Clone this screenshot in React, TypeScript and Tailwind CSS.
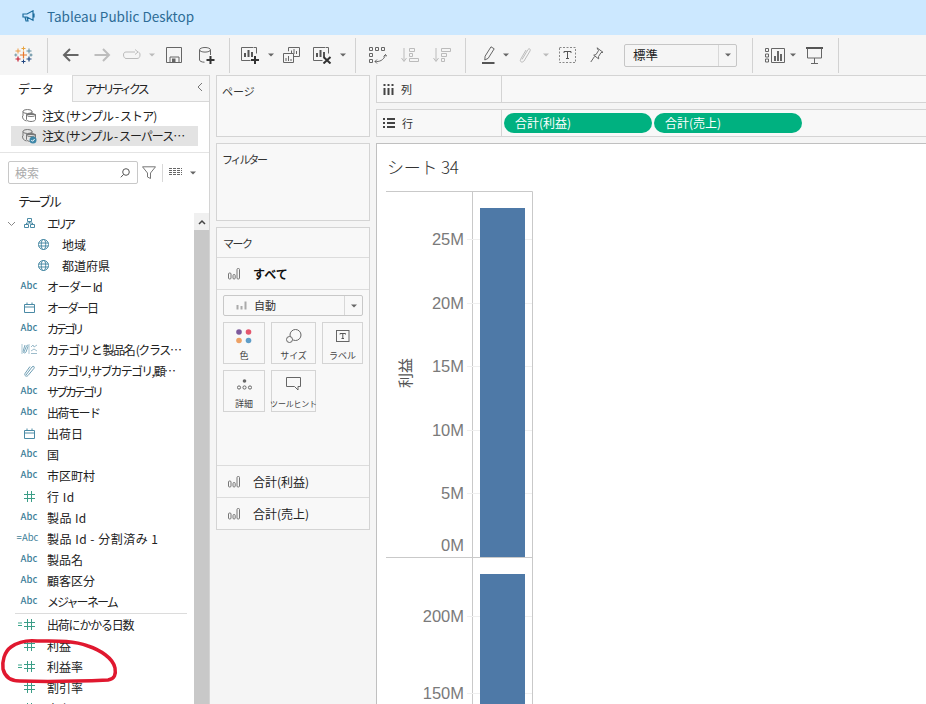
const FONT = '"Noto Sans CJK JP","Noto Sans",sans-serif';

function Svg({ w, h, className = "", children }: { w: number; h: number; className?: string; children?: React.ReactNode }) {
  return (
    <svg width={w} height={h} viewBox={`0 0 ${w} ${h}`} fill="none" className={`shrink-0 block ${className}`}>
      {children}
    </svg>
  );
}

function Caret({ c = "#777", className = "" }: { c?: string; className?: string }) {
  return (
    <Svg w={6} h={4} className={className}>
      <path d="M0 0.5h6L3 3.5z" fill={c} />
    </Svg>
  );
}

function Sep({ className = "" }: { className?: string }) {
  return <div className={`w-px h-[35px] bg-[#d2d2d2] shrink-0 ${className}`} />;
}

function BarsIcon({ c = "#777" }: { c?: string }) {
  return (
    <Svg w={12} h={12}>
      <rect x=".5" y="5" width="2.500" height="6" rx="1" stroke={c} />
      <rect x="5" y="6.500" width="2.200" height="4.500" rx="1" stroke={c} />
      <rect x="9" y=".5" width="2.500" height="10.500" rx="1" stroke={c} />
    </Svg>
  );
}

function Logo() {
  const P = ({ x, y, r, c, t = 1 }: { x: number; y: number; r: number; c: string; t?: number }) => (
    <path d={`M${x - r} ${y}h${2 * r}M${x} ${y - r}v${2 * r}`} stroke={c} strokeWidth={t} />
  );
  return (
    <Svg w={19} h={18} className="ml-[14px]">
      <P x={9.5} y={9} r={3.5} c="#e8762b" t={1.2} />
      <P x={9.5} y={2.5} r={2} c="#e8a33d" />
      <P x={4} y={5} r={2.5} c="#eb9a45" />
      <P x={15} y={5} r={2.5} c="#5b879b" />
      <P x={1.8} y={9} r={1.5} c="#7199a6" />
      <P x={17} y={9} r={1.5} c="#59879b" />
      <P x={4} y={13} r={2.5} c="#c72035" t={1.2} />
      <P x={15} y={13} r={2.5} c="#1f457e" t={1.2} />
      <P x={9.5} y={15.5} r={2} c="#1f447e" />
    </Svg>
  );
}

function NewSheet({ kind }: { kind: "add" | "clear" }) {
  return (
    <Svg w={19} h={18}>
      <path d="M12 1.500H.5v13h9" stroke="#666" />
      <path d="M12.500 1.500h3v6" stroke="#666" />
      <path d="M4 11V7M7.500 11V4M11 11V6" stroke="#555" strokeWidth="2" />
      {kind === "add" ? (
        <path d="M14 10v8M10 14h8" stroke="#333" strokeWidth="2" />
      ) : (
        <path d="M10.500 11l7 6.500M17.500 11l-7 6.500" stroke="#333" strokeWidth="2" />
      )}
    </Svg>
  );
}

function Toolbar() {
  return (
    <div className="h-10 bg-[#f5f5f5] flex items-center shrink-0">
      <Logo />
      <Sep className="ml-[14px]" />
      <Svg w={17} h={16} className="ml-[14px]">
        <path d="M16.500 8H2M8 2L2 8l6 6" stroke="#666" strokeWidth="2" />
      </Svg>
      <Svg w={17} h={16} className="ml-[15px]">
        <path d="M.5 8H15M9 2l6 6-6 6" stroke="#bdbdbd" strokeWidth="2" />
      </Svg>
      <Svg w={18} h={12} className="ml-[12px]">
        <path d="M3 3h9M12 .5L15 3l-3 2.500" stroke="#bbb" />
        <path d="M3 3C1 3 .5 4.500.5 6S1.500 9.500 3 9.500h11c2 0 3-1.500 3-3.500 0-1.500-.5-2.500-1.500-3" stroke="#bbb" />
      </Svg>
      <Caret c="#bbb" className="ml-[8px]" />
      <Svg w={16} h={16} className="ml-[11px]">
        <path d="M.5.5h15v15H.500z" stroke="#666" />
        <path d="M4 15.500V10h9v5.500" stroke="#666" />
        <rect x="6" y="11.500" width="3.500" height="3.500" fill="#666" />
      </Svg>
      <Svg w={16} h={17} className="ml-[17px]">
        <ellipse cx="6" cy="2.800" rx="5.500" ry="2.300" stroke="#666" />
        <path d="M.5 3v10c0 1 2 2.200 5 2.200M11.500 3v5" stroke="#666" />
        <path d="M11.500 9v8M7.500 13h8" stroke="#333" strokeWidth="2" />
      </Svg>
      <Sep className="ml-[14px]" />
      <div className="ml-[11px]"><NewSheet kind="add" /></div>
      <Caret c="#666" className="ml-[8px]" />
      <Svg w={17} h={16} className="ml-[9px]">
        <path d="M6 4h-.5V.5h11v9H11" stroke="#666" />
        <path d="M8.500 7V3.500M11 7V2M13.500 7V4" stroke="#666" />
        <path d="M.5 6.500h10v9H.500z" stroke="#666" fill="#f5f5f5" />
        <path d="M3 14v-3M5.500 14V9M8 14v-2" stroke="#666" />
      </Svg>
      <div className="ml-[13px]"><NewSheet kind="clear" /></div>
      <Caret c="#666" className="ml-[8px]" />
      <Sep className="ml-[9px]" />
      <Svg w={18} h={17} className="ml-[13px]">
        <path d="M.5.5h3v3h-3zM6.500.5h3v3h-3zM12.500.5h3v3h-3zM.5 6.500h3v3h-3zM.5 12.500h3v3h-3z" stroke="#666" />
        <path d="M6 14.500c4 .5 9-1 10.500-7M14.500 9.500l2-2 1.500 2M6 14.500l2-2M6 14.500l2 2" stroke="#666" />
      </Svg>
      <Svg w={18} h={16} className="ml-[14px]">
        <path d="M3 1v13M.5 11L3 14.500 5.500 11" stroke="#bbb" />
        <path d="M8.500 1.500h5v3h-5zM8.500 6.500h3v3h-3zM8.500 11.500h9v3h-9z" stroke="#bbb" />
      </Svg>
      <Svg w={18} h={16} className="ml-[14px]">
        <path d="M3 1v13M.5 11L3 14.500 5.500 11" stroke="#bbb" />
        <path d="M8.500 1.500h9v3h-9zM8.500 6.500h5v3h-5zM8.500 11.500h3v3h-3z" stroke="#bbb" />
      </Svg>
      <Sep className="ml-[14px]" />
      <Svg w={13} h={18} className="ml-[16px]">
        <path d="M9 .8l3.200 2-6 9.500-3.400 1.700.3-3.800z" stroke="#666" />
        <path d="M0 17h12.500" stroke="#555" strokeWidth="2" />
      </Svg>
      <Caret c="#666" className="ml-[8px]" />
      <Svg w={12} h={16} className="ml-[10px]">
        <path d="M3 12.500l6-10c1-1.500 3-.5 2 1.500L5 14c-1.500 2-4.500 1-3.500-1.500L7 3" stroke="#bbb" />
      </Svg>
      <Caret c="#bbb" className="ml-[12px]" />
      <Svg w={17} h={16} className="ml-[10px]">
        <rect x=".5" y=".5" width="16" height="15" stroke="#888" strokeDasharray="2 1.500" />
        <path d="M5 4.500h7M5 4.500v1.500M12 4.500v1.500M8.500 4.500v7M7 11.500h3" stroke="#555" />
      </Svg>
      <Svg w={14} h={16} className="ml-[14px]">
        <path d="M7 .8l6 4.500-2 .3-2.500 4 .2 2.300-5-3.700 2.300-.6 2.500-4z" stroke="#666" />
        <path d="M4.500 9.500L.8 15" stroke="#666" />
      </Svg>
      <div className="ml-5 w-[113px] h-[23px] border border-[#c6c6c6] rounded-[2px] flex items-center shrink-0">
        <span className="flex-1 pl-2 text-[12.500px] text-[#222]">標準</span>
        <div className="w-[18px] h-full border-l border-[#d8d8d8] flex items-center justify-center">
          <Caret c="#666" />
        </div>
      </div>
      <Sep className="ml-[15px]" />
      <Svg w={20} h={15} className="ml-3">
        <path d="M.5.5h3v3h-3zM.5 6h3v3h-3zM.5 11h3v3h-3zM6.500.5h13v14h-13z" stroke="#666" />
        <path d="M10 13V8M13 13V3M16 13V6" stroke="#666" strokeWidth="2" />
      </Svg>
      <Caret c="#666" className="ml-[5px]" />
      <Svg w={17} h={17} className="ml-[10px]">
        <path d="M0 1h17" stroke="#555" strokeWidth="2" />
        <path d="M1.500 1.500v9.500h14V1.500M8.500 11v5M5 16.500h7" stroke="#666" />
      </Svg>
      <Sep className="ml-[15px]" />
    </div>
  );
}

function Cyl({ check = false }: { check?: boolean }) {
  return (
    <Svg w={16} h={16}>
      <ellipse cx="6.500" cy="3.500" rx="4.500" ry="2" stroke="#777" />
      <path d="M2 3.500V8M11 3.500V6" stroke="#777" />
      <path d="M5.500 6.500h9v5c0 1-2 2-4.500 2s-4.500-1-4.500-2z" stroke="#777" />
      <ellipse cx="10" cy="7" rx="4.500" ry="1.500" stroke="#777" />
      <path d="M1.500 8c0 3 1 4 4 5" stroke="#777" />
      {check && <circle cx="12" cy="12" r="3.500" fill="#3d87a8" />}
      {check && <path d="M10.300 12l1.300 1.300 2-2.300" stroke="#fff" />}
    </Svg>
  );
}

function Abc() {
  return <span className="text-[9.500px] leading-none text-[#3f7f9a] font-['Liberation_Sans'] font-medium">Abc</span>;
}
function EqAbc() {
  return <span className="text-[9.500px] leading-none text-[#3f7f9a] font-['Liberation_Sans'] -ml-[3px]">=Abc</span>;
}
function Hash({ eq = false }: { eq?: boolean }) {
  return (
    <span className="flex items-center">
      {eq && (
        <Svg w={5} h={5} className="mr-[1px] -ml-[6px]">
          <path d="M0 1h4M0 3.500h4" stroke="#3ba58a" />
        </Svg>
      )}
      <Svg w={11} h={11}>
        <path d="M3.500 0v11M7.500 0v11M0 3.500h11M0 7.500h11" stroke="#3b9d87" />
      </Svg>
    </span>
  );
}
function Cal() {
  return (
    <Svg w={11} h={11}>
      <path d="M.5 2.500h10v8H.500zM.5 5h10M3 .5v2M8 .5v2" stroke="#4a8aa5" />
    </Svg>
  );
}
function Globe() {
  return (
    <Svg w={11} h={11}>
      <circle cx="5.500" cy="5.500" r="5" stroke="#4a8aa5" />
      <ellipse cx="5.500" cy="5.500" rx="2.200" ry="5" stroke="#4a8aa5" />
      <path d="M.5 4h10M.5 7h10" stroke="#4a8aa5" />
    </Svg>
  );
}
function Hier() {
  return (
    <Svg w={11} h={10}>
      <path d="M3.500.5h4v3h-4zM.5 6.500h4v3h-4zM6.500 6.500h4v3h-4zM5.500 3.500V5M2.500 6.500V5h6v1.500" stroke="#4a8aa5" />
    </Svg>
  );
}
function Clip() {
  return (
    <Svg w={12} h={13}>
      <path d="M3 11l6-8c1.300-1.500 3-.3 2 1.300L5 11.500c-1.500 1.500-4 .3-3-2L7 2.500" stroke="#6d9db3" />
    </Svg>
  );
}
function Cluster() {
  return (
    <Svg w={17} h={12}>
      <path d="M3 9l2.500-6c.6-1.500 2-1 1.500.5L5 9c-.5 1.500-3 1-3-.5L4 2" stroke="#7aa8bd" />
      <path d="M1 1v10M8 1v10" stroke="#a9c6d3" />
      <path d="M10 4l2-2 1 2 3-2M10 8l3-2 3 2M10 10.500h6" stroke="#9dbccb" />
    </Svg>
  );
}

type Row = { icon: React.ReactNode; text: string; indent?: boolean; divider?: boolean; t?: string };
const A = <Abc />;
const rows: Row[] = [
  { icon: <Hier />, text: "エリア", t: "tracking-[-3.5px]" },
  { icon: <Globe />, text: "地域", indent: true },
  { icon: <Globe />, text: "都道府県", indent: true },
  { icon: A, text: "オーダー Id", t: "tracking-[-1px]" },
  { icon: <Cal />, text: "オーダー日", t: "tracking-[-2px]" },
  { icon: A, text: "カテゴリ", t: "tracking-[-3.5px]" },
  { icon: <Cluster />, text: "カテゴリ と 製品名 (クラス…", t: "tracking-[-1.4px]" },
  { icon: <Clip />, text: "カテゴリ, サブカテゴリ, 顧…", t: "tracking-[-1.8px]" },
  { icon: A, text: "サブカテゴリ", t: "tracking-[-3px]" },
  { icon: A, text: "出荷モード", t: "tracking-[-1.5px]" },
  { icon: <Cal />, text: "出荷日" },
  { icon: A, text: "国" },
  { icon: A, text: "市区町村" },
  { icon: <Hash />, text: "行 Id", t: "tracking-[0.5px]" },
  { icon: A, text: "製品 Id", t: "tracking-[0.4px]" },
  { icon: <EqAbc />, text: "製品 Id - 分割済み 1", t: "tracking-[0.5px]" },
  { icon: A, text: "製品名" },
  { icon: A, text: "顧客区分" },
  { icon: A, text: "メジャー ネーム", divider: true, t: "tracking-[-2px]" },
  { icon: <Hash eq />, text: "出荷にかかる日数", t: "tracking-[-1.2px]" },
  { icon: <Hash />, text: "利益" },
  { icon: <Hash eq />, text: "利益率" },
  { icon: <Hash />, text: "割引率" },
  { icon: <Hash />, text: "売上" },
];

function FieldRow({ r, first }: { r: Row; first: boolean }) {
  return (
    <div className="h-[21px] flex items-center relative shrink-0">
      {first && (
        <Svg w={9} h={6} className="absolute left-[7px] top-[8px]">
          <path d="M1 1l3.500 3.500L8 1" stroke="#888" />
        </Svg>
      )}
      <div className={`flex items-center justify-center shrink-0 ${r.indent ? "w-[62px] pl-[38px] pr-[14px]" : "w-[47px] pl-[14px] pr-[3px]"}`}>
        {r.icon}
      </div>
      <span className={`text-[12px] leading-[21px] text-[#222] whitespace-nowrap ${r.t ?? ""}`}>{r.text}</span>
    </div>
  );
}

function Left() {
  return (
    <div className="w-[210px] shrink-0 bg-white border-r border-[#d4d4d4] flex flex-col">
      <div className="h-[27px] flex shrink-0 text-[12px] text-[#222]">
        <div className="w-[72px] flex items-center pl-[18px]">データ</div>
        <div className="flex-1 bg-[#f6f6f6] border-l border-t border-b border-[#d8d8d8] flex items-center pl-[12px] relative tracking-[-3px]">
          アナリティクス
          <Svg w={6} h={10} className="absolute right-[6px] top-[6px]">
            <path d="M5 1L1 5l4 4" stroke="#777" />
          </Svg>
        </div>
      </div>
      <div className="h-[51px] shrink-0 border-b border-[#e4e4e4] pl-[11px] pr-[11px] pt-[4px] text-[12px] text-[#222] whitespace-nowrap">
        <div className="h-[20px] flex items-center pl-[10px] gap-[5px] tracking-[-0.9px]"><Cyl />注文 (サンプル - ストア)</div>
        <div className="h-[20px] bg-[#e3e3e3] flex items-center pl-[10px] gap-[5px] tracking-[-1px]"><Cyl check />注文 (サンプル - スーパース…</div>
      </div>
      <div className="flex items-center pl-[8px] mt-[8px] shrink-0">
        <div className="w-[130px] h-[23px] border border-[#c8c8c8] rounded-[2px] flex items-center justify-between pl-[6px] pr-[7px] text-[12px] text-[#aaa]">
          検索
          <Svg w={10} h={10}>
            <circle cx="6" cy="4" r="3.300" stroke="#555" />
            <path d="M3.500 6.500L.8 9.300" stroke="#555" />
          </Svg>
        </div>
        <Svg w={14} h={13} className="ml-[4px]">
          <path d="M.5.8h13L8.500 7v5.500l-3-1.500V7z" stroke="#777" />
        </Svg>
        <div className="w-px h-[18px] bg-[#d8d8d8] ml-[6px]" />
        <Svg w={13} h={9} className="ml-[6px]">
          <path d="M0 .5h13M0 2.500h13M0 4.500h13M0 6.500h13" stroke="#666" strokeDasharray="3 1" />
        </Svg>
        <Caret c="#666" className="ml-[8px]" />
      </div>
      <div className="h-[29px] shrink-0 flex items-center pl-[18px] pt-[4px] text-[13px] text-[#222] tracking-[-2.500px]">テーブル</div>
      <div className="flex-1 flex min-h-0 overflow-hidden">
        <div className="flex-1 min-w-0 overflow-hidden flex flex-col -mt-[0.5px]">
          {rows.map((r, i) => (
            <div key={r.text} className="shrink-0">
              <FieldRow r={r} first={i === 0} />
              {r.divider && <div className="h-[2px] ml-[15px] mr-[7px] border-b border-[#dcdcdc]" />}
            </div>
          ))}
        </div>
        <div className="w-[15px] flex flex-col shrink-0">
          <div className="h-[17px] bg-[#f0f0f0] flex items-center justify-center">
            <Svg w={8} h={6}><path d="M1 5l3-3 3 3" stroke="#444" strokeWidth="1.500" /></Svg>
          </div>
          <div className="flex-1 bg-[#c8c8c8]" />
        </div>
      </div>
    </div>
  );
}

function MarkTile({ label, w, icon, small = false }: { label: string; w: string; icon: React.ReactNode; small?: boolean }) {
  return (
    <div className={`h-[42px] border border-[#d4d4d4] flex flex-col items-center shrink-0 ${w}`}>
      <div className="h-[26px] flex items-center justify-center">{icon}</div>
      <span className={`${small ? "text-[8px] tracking-[-0.2px]" : "text-[9px]"} leading-[14px] text-[#444] whitespace-nowrap`}>{label}</span>
    </div>
  );
}

function Middle() {
  const card = "bg-[#f8f8f8] border border-[#d4d4d4] shrink-0";
  return (
    <div className="w-[166px] shrink-0 bg-[#f5f5f5] flex flex-col pl-[6px] pr-[6px] gap-[6px]">
      <div className={`${card} h-[62px] pl-[5px] pt-[7px] text-[11px] text-[#333]`}>ページ</div>
      <div className={`${card} h-[78px] pl-[5px] pt-[7px] text-[11px] text-[#333] tracking-[-2.200px]`}>フィルター</div>
      <div className={`${card} h-[303px] flex flex-col`}>
        <div className="h-[30px] border-b border-[#dcdcdc] flex items-center pl-[6px] pt-[1px] text-[11px] text-[#333] shrink-0 tracking-[-1.500px]">マーク</div>
        <div className="h-[32px] border-b border-[#dcdcdc] flex items-center pl-[11px] gap-[13px] shrink-0">
          <BarsIcon />
          <span className="text-[12px] font-bold text-[#111]">すべて</span>
        </div>
        <div className="flex-1 px-[6px] pt-[5px]">
          <div className="h-[21px] border border-[#c8c8c8] rounded-[2px] flex items-center">
            <div className="flex-1 flex items-center pl-[12px] gap-[7px]">
              <Svg w={11} h={9}>
                <rect x=".5" y="4" width="2" height="4.500" fill="#aaa" />
                <rect x="4.500" y="5" width="2" height="3.500" fill="#aaa" />
                <rect x="8.500" y=".5" width="2" height="8" fill="#aaa" />
              </Svg>
              <span className="text-[11px] text-[#333]">自動</span>
            </div>
            <div className="w-[18px] h-full border-l border-[#d8d8d8] flex items-center justify-center">
              <Caret c="#666" />
            </div>
          </div>
          <div className="flex gap-[6px] mt-[6px]">
            <MarkTile label="色" w="w-[42px]" icon={
              <Svg w={16} h={15}>
                <circle cx="3" cy="3" r="2.800" fill="#7d5a9c" />
                <circle cx="12.500" cy="3" r="2.800" fill="#e4566d" />
                <circle cx="3" cy="11.500" r="2.800" fill="#eda165" />
                <circle cx="12.500" cy="11.500" r="2.800" fill="#5f9dc8" />
              </Svg>
            } />
            <MarkTile label="サイズ" w="w-[45px]" icon={
              <Svg w={16} h={14}>
                <circle cx="9.500" cy="6" r="5.500" stroke="#666" />
                <circle cx="3.500" cy="10.500" r="3" stroke="#666" fill="#f8f8f8" />
              </Svg>
            } />
            <MarkTile label="ラベル" w="w-[41px]" icon={
              <Svg w={14} h={12}>
                <rect x=".5" y=".5" width="12.500" height="11" stroke="#666" />
                <path d="M4 3.500h5.500M4 3.500v1M9.500 3.500v1M6.800 3.500v5M5.500 8.500h2.500" stroke="#555" />
              </Svg>
            } />
          </div>
          <div className="flex gap-[6px] mt-[6px]">
            <MarkTile label="詳細" w="w-[42px]" icon={
              <Svg w={15} h={11}>
                <circle cx="7.500" cy="2" r="1.800" fill="#666" />
                <circle cx="2" cy="8.500" r="1.600" stroke="#666" />
                <circle cx="7.500" cy="8.500" r="1.600" stroke="#666" />
                <circle cx="13" cy="8.500" r="1.600" stroke="#666" />
              </Svg>
            } />
            <MarkTile label="ツールヒント" w="w-[45px]" small icon={
              <Svg w={15} h={14}>
                <path d="M.5.500h14v9H12v3.500L8.500 9.500h-8z" stroke="#666" />
              </Svg>
            } />
          </div>
        </div>
        <div className="h-[32px] border-t border-[#dcdcdc] flex items-center pl-[11px] gap-[13px] shrink-0 text-[12px] text-[#222]">
          <BarsIcon />合計(利益)
        </div>
        <div className="h-[32px] border-t border-[#dcdcdc] flex items-center pl-[11px] gap-[13px] shrink-0 text-[12px] text-[#222]">
          <BarsIcon />合計(売上)
        </div>
      </div>
    </div>
  );
}

function Shelf({ icon, label, children }: { icon: React.ReactNode; label: string; children?: React.ReactNode }) {
  return (
    <div className="h-[28px] bg-[#f8f8f8] border-y border-l border-[#d4d4d4] flex shrink-0">
      <div className="w-[125px] border-r border-[#d4d4d4] flex items-center pl-[6px] gap-[7px] text-[11px] text-[#333] shrink-0">
        {icon}{label}
      </div>
      <div className="flex items-center pl-[2px] gap-[2px]">{children}</div>
    </div>
  );
}

function Pill({ t }: { t: string }) {
  return (
    <div className="w-[148px] h-[20px] rounded-[10px] bg-[#00b180] text-white text-[12px] flex items-center pl-[11px] shrink-0">
      {t}
    </div>
  );
}

const ticks = [
  { y: 239, t: "25M" }, { y: 303, t: "20M" }, { y: 366, t: "15M" }, { y: 430, t: "10M" }, { y: 493, t: "5M" },
  { y: 545, t: "0M", noLine: true }, { y: 616, t: "200M" }, { y: 693, t: "150M" },
];

function Chart() {
  const O = 144;
  return (
    <svg width="549" height="560" viewBox={`377 ${O} 549 560`} className="block" fill="none">
      <path d="M386 191.500H532.500V704M472.500 191.500V704M386 557.500H532.500" stroke="#c9c9c9" />
      {ticks.filter((x) => !x.noLine).map((x) => (
        <path key={x.t} d={`M467 ${x.y + 0.5}H532`} stroke="#efefef" />
      ))}
      <rect x="480" y="208" width="45" height="349" fill="#4e79a7" />
      <rect x="480" y="574" width="45" height="130" fill="#4e79a7" />
      {ticks.map((x) => (
        <text key={x.t} x="464" y={x.y + 6} textAnchor="end" fontSize="16.500" fill="#7a7a7a" fontFamily="Liberation Sans, sans-serif">{x.t}</text>
      ))}
      <text transform="translate(411 388) rotate(-90)" fontSize="15" fill="#555" fontFamily={FONT}>利益</text>
    </svg>
  );
}

function Right() {
  return (
    <div className="flex-1 min-w-0 flex flex-col bg-[#f5f5f5] gap-[6px]">
      <Shelf label="列" icon={
        <Svg w={11} h={11}>
          <path d="M1.500 0v2M5.500 0v2M9.500 0v2M1.500 4v7M5.500 4v7M9.500 4v7" stroke="#444" strokeWidth="2" />
        </Svg>
      } />
      <Shelf label="行" icon={
        <Svg w={12} h={10}>
          <path d="M0 1h2M4 1h8M0 5h2M4 5h8M0 9h2M4 9h8" stroke="#444" strokeWidth="2" />
        </Svg>
      }>
        <Pill t="合計(利益)" />
        <Pill t="合計(売上)" />
      </Shelf>
      <div className="flex-1 min-h-0 bg-white border-t border-l border-[#c0c0c0] relative overflow-hidden">
        <div className="absolute left-[10px] top-[11px] text-[17px] leading-[24px] font-light text-[#333] tracking-[-0.2px]">シート 34</div>
        <Chart />
      </div>
    </div>
  );
}

export default function App() {
  return (
    <div className="w-[926px] h-[704px] overflow-hidden relative flex flex-col bg-[#f5f5f5]" style={{ fontFamily: FONT }}>
      <div className="h-[35px] bg-[#cce8ff] flex items-center pl-[22px] pb-[3px] shrink-0">
        <Svg w={13} h={12}>
          <path d="M1 4h4L11 .8v9.400L5 7H1zM3 7l1 4h2L5 7M12 3.500v4" stroke="#1d6d9e" strokeWidth="1.200" />
        </Svg>
        <span className="ml-[12px] text-[13.500px] text-[#2d6c96] font-['Open_Sans']">Tableau Public Desktop</span>
      </div>
      <Toolbar />
      <div className="flex-1 min-h-0 flex">
        <Left />
        <Middle />
        <Right />
      </div>
      <svg width="926" height="704" viewBox="0 0 926 704" fill="none" className="absolute left-0 top-0 pointer-events-none">
        <path d="M37 641C27 640 18 642 11 647 4 652 2 662 3 669 5 677 11 681 20 681 50 682 85 681 108 680 115 679 116 674 115 668 113 658 100 650 88 646 72 640 55 641 37 641Z" stroke="#e0182f" strokeWidth="3.500" />
      </svg>
    </div>
  );
}
